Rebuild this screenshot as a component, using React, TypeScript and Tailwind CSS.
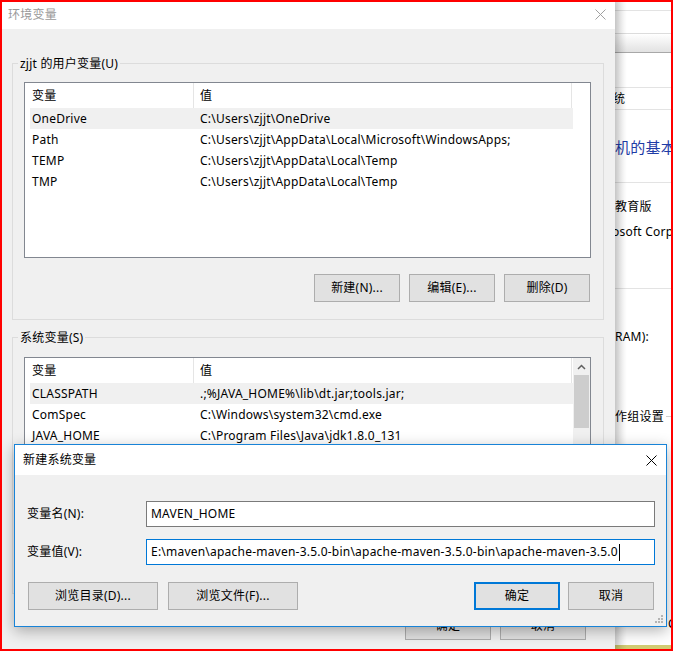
import React from 'react';

const userVars = [
  ['OneDrive', 'C:\\Users\\zjjt\\OneDrive'],
  ['Path', 'C:\\Users\\zjjt\\AppData\\Local\\Microsoft\\WindowsApps;'],
  ['TEMP', 'C:\\Users\\zjjt\\AppData\\Local\\Temp'],
  ['TMP', 'C:\\Users\\zjjt\\AppData\\Local\\Temp'],
];

const sysVars = [
  ['CLASSPATH', '.;%JAVA_HOME%\\lib\\dt.jar;tools.jar;'],
  ['ComSpec', 'C:\\Windows\\system32\\cmd.exe'],
  ['JAVA_HOME', 'C:\\Program Files\\Java\\jdk1.8.0_131'],
  ['NUMBER_OF_PROCESSORS', '4'],
  ['OS', 'Windows_NT'],
  ['Path', 'C:\\ProgramData\\Oracle\\Java\\javapath;%JAVA_HOME%\\bin;'],
  ['PATHEXT', '.COM;.EXE;.BAT;.CMD;.VBS;.VBE;.JS;.JSE;.WSF;.WSH;.MSC'],
];

const Btn = ({ label, w, primary }: { label: string; w: string; primary?: boolean }) => (
  <div
    className={`flex h-[28px] ${w} items-center justify-center bg-[#e1e1e1] text-black ${
      primary ? 'border-2 border-[#0078d7]' : 'border border-[#adadad]'
    }`}
  >
    {label}
  </div>
);

const VarList = ({ rows, scroll }: { rows: string[][]; scroll?: boolean }) => (
  <div className="flex h-[176px] w-[567px] overflow-hidden border border-[#828790] bg-white">
    <div className="w-[548px] shrink-0">
      <div className="flex h-[25px]">
        <div className="flex h-full w-[169px] items-center border-r border-[#e5e5e5] pl-[7px]">变量</div>
        <div className="flex h-full w-[378px] items-center border-r border-[#e5e5e5] pl-[6px]">值</div>
      </div>
      {rows.map(([name, value], i) => (
        <div
          key={name + i}
          className={`ml-[5px] flex h-[21px] w-[543px] items-center whitespace-nowrap ${i === 0 ? 'bg-[#f0f0f0]' : ''}`}
        >
          <div className="w-[164px] shrink-0 pl-[2px]">{name}</div>
          <div className="pl-[6px]">{value}</div>
        </div>
      ))}
    </div>
    {scroll && (
      <div className="flex w-[17px] flex-col bg-[#f0f0f0]">
        <div className="flex h-[17px] items-center justify-center">
          <svg width="9" height="6" viewBox="0 0 9 6">
            <path d="M1 5 L4.5 1.5 L8 5" fill="none" stroke="#606060" strokeWidth="1.5" />
          </svg>
        </div>
        <div className="mx-[1px] h-[53px] bg-[#cdcdcd]" />
      </div>
    )}
  </div>
);

const Group = ({ title, children }: { title: string; children: React.ReactNode }) => (
  <div className="relative h-[257px] w-[592px] border border-[#dcdcdc] pl-[11px] pt-[18px]">
    <span className="absolute -top-[9px] left-[5px] bg-[#f0f0f0] px-[2px] leading-[17px]">{title}</span>
    {children}
  </div>
);

const EnvDialog = () => (
  <div className="relative z-10 flex h-[651px] w-[615px] shrink-0 flex-col bg-[#f0f0f0] shadow-[3px_0_8px_rgba(0,0,0,0.18)]">
    <div className="flex h-[29px] items-center justify-between bg-white pl-[8px] pr-[9px] text-[#999999]">
      <span>环境变量</span>
      <svg width="11" height="11" viewBox="0 0 11 11">
        <path d="M0.5 0.5 L10.5 10.5 M10.5 0.5 L0.5 10.5" stroke="#a0a0a0" strokeWidth="1" />
      </svg>
    </div>
    <div className="flex flex-col pl-[12px] pt-[34px]">
      <Group title="zjjt 的用户变量(U)">
        <VarList rows={userVars} />
        <div className="mt-[16px] flex w-[567px] justify-end gap-[9px] pr-[1px]">
          <Btn label="新建(N)..." w="w-[86px]" />
          <Btn label="编辑(E)..." w="w-[86px]" />
          <Btn label="删除(D)" w="w-[86px]" />
        </div>
      </Group>
      <div className="mt-[17px]">
        <Group title="系统变量(S)">
          <div className="pt-[1px]">
            <VarList rows={sysVars} scroll />
          </div>
          <div className="mt-[16px] flex w-[567px] justify-end gap-[9px] pr-[1px]">
            <Btn label="新建(W)..." w="w-[86px]" />
            <Btn label="编辑(I)..." w="w-[86px]" />
            <Btn label="删除(L)" w="w-[86px]" />
          </div>
        </Group>
      </div>
      <div className="mt-[18px] flex justify-end gap-[9px] pr-[29px]">
        <Btn label="确定" w="w-[86px]" />
        <Btn label="取消" w="w-[86px]" />
      </div>
    </div>
  </div>
);

const BackWindow = () => (
  <div className="relative flex-1 overflow-hidden bg-white text-black">
    <div className="h-[11px] border-b border-[#e3e3e3]" />
    <div className="h-[23px] border-b border-[#dcdcdc]" />
    <div className="h-[19px] border-b border-[#a8a8a8] bg-gradient-to-b from-white to-[#e2e2e2]" />
    <div className="h-[35px] border-b border-[#e3e3e3]" />
    <div className="flex h-[22px] items-center border-b border-[#e3e3e3] whitespace-nowrap">
      <span className="-ml-[2px]">统</span>
    </div>
    <div className="h-[73px] border-b border-[#e3e3e3] pt-[27px] whitespace-nowrap text-[15px] leading-[20px] text-[#1f3ca6]">
      机的基本信息
    </div>
    <div className="h-[106px] border-b border-[#e3e3e3] pt-[15px] whitespace-nowrap">
      <div className="h-[25px] leading-[17px]">教育版</div>
      <div className="-ml-[3px] leading-[17px]">osoft Corporation</div>
    </div>
    <div className="pt-[39px] whitespace-nowrap leading-[17px]">RAM):</div>
    <div className="mt-[63px] flex items-center whitespace-nowrap leading-[17px]">
      <span>作组设置</span>
      <div className="ml-[2px] h-px flex-1 bg-[#d0d0d0]" />
    </div>
    <div className="mt-[190px] -ml-[2px] leading-[17px]">
      <span className="ml-[55px]">C</span>
    </div>
    <div className="absolute bottom-0 left-0 h-[6px] w-full bg-[#d2cc73]" />
    <div className="absolute inset-y-0 left-0 w-[12px] bg-gradient-to-r from-black/10 to-transparent" />
  </div>
);

const Field = ({ label, value, focused }: { label: string; value: string; focused?: boolean }) => (
  <div className="flex items-center">
    <div className="w-[119px] shrink-0">{label}</div>
    <div
      className={`flex h-[26px] w-[509px] items-center border bg-white pl-[4px] whitespace-nowrap ${
        focused ? 'border-[#0078d7]' : 'border-[#7a7a7a]'
      }`}
    >
      <span>{value}</span>
      {focused && <span className="ml-px h-[17px] w-px bg-black" />}
    </div>
  </div>
);

const NewVarDialog = () => (
  <div className="absolute left-[14px] top-[444px] z-20 flex h-[183px] w-[653px] flex-col border border-[#1883d7] bg-[#f0f0f0] shadow-[0_4px_14px_rgba(0,0,0,0.3)]">
    <div className="flex h-[30px] shrink-0 items-center justify-between bg-white pl-[8px] pr-[9px]">
      <span>新建系统变量</span>
      <svg width="11" height="11" viewBox="0 0 11 11">
        <path d="M0.5 0.5 L10.5 10.5 M10.5 0.5 L0.5 10.5" stroke="#000000" strokeWidth="1" />
      </svg>
    </div>
    <div className="flex flex-col pl-[12px] pt-[26px]">
      <Field label="变量名(N):" value="MAVEN_HOME" />
      <div className="mt-[12px]">
        <Field
          label="变量值(V):"
          value="E:\maven\apache-maven-3.5.0-bin\apache-maven-3.5.0-bin\apache-maven-3.5.0"
          focused
        />
      </div>
      <div className="mt-[17px] flex pl-[1px] pr-[12px]">
        <div className="flex gap-[10px]">
          <Btn label="浏览目录(D)..." w="w-[130px]" />
          <Btn label="浏览文件(F)..." w="w-[130px]" />
        </div>
        <div className="ml-auto flex gap-[8px]">
          <Btn label="确定" w="w-[86px]" primary />
          <Btn label="取消" w="w-[86px]" />
        </div>
      </div>
    </div>
    <svg className="absolute bottom-[3px] right-[3px]" width="8" height="8" viewBox="0 0 8 8">
      <g fill="#b4b4b4">
        <rect x="6" y="0" width="2" height="2" />
        <rect x="3" y="3" width="2" height="2" />
        <rect x="6" y="3" width="2" height="2" />
        <rect x="0" y="6" width="2" height="2" />
        <rect x="3" y="6" width="2" height="2" />
        <rect x="6" y="6" width="2" height="2" />
      </g>
    </svg>
  </div>
);

export default function App() {
  return (
    <div className="relative flex h-[651px] w-[673px] overflow-hidden bg-white font-['Noto_Sans','Noto_Sans_CJK_SC',sans-serif] text-[12px] tracking-[0.22px] text-black">
      <EnvDialog />
      <BackWindow />
      <NewVarDialog />
      <div className="pointer-events-none absolute inset-0 z-30 border-2 border-[#ff0000]" />
    </div>
  );
}
